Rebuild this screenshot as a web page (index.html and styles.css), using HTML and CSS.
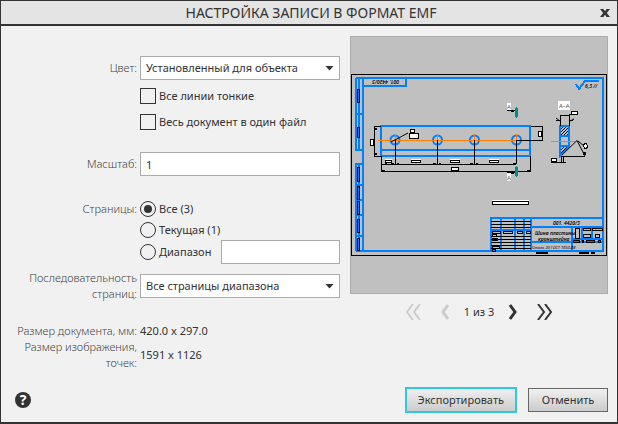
FILE: index.html
```html
<!DOCTYPE html>
<html lang="ru">
<head>
<meta charset="utf-8">
<meta name="viewport" content="width=device-width, initial-scale=1">
<title>Настройка записи в формат EMF</title>
<link rel="stylesheet" href="styles.css">
</head>
<body>
<div class="dialog">
  <header class="titlebar">
    <h1 class="title">НАСТРОЙКА ЗАПИСИ В ФОРМАТ EMF</h1>
    <button class="icon-button close" type="button" aria-label="Закрыть">
      <svg width="10" height="10" viewBox="0 0 10 10"><path d="M0 1H3.4L5 3.2 6.6 1H10L6.8 5 10 9H6.6L5 6.7 3.4 9H0L3.2 5Z" fill="#333"/></svg>
    </button>
  </header>
  <main class="content">
    <form class="form">
      <div class="row">
        <label class="label" for="color">Цвет:</label>
        <div class="select-box"><select class="field" id="color"><option>Установленный для объекта</option></select></div>
      </div>
      <div class="row checks">
        <div class="options">
          <label class="option"><input class="check" type="checkbox">Все линии тонкие</label>
          <label class="option"><input class="check" type="checkbox">Весь документ в один файл</label>
        </div>
      </div>
      <div class="row scale">
        <label class="label" for="scale">Масштаб:</label>
        <input class="field" id="scale" type="text" value="1">
      </div>
      <div class="row pages" role="radiogroup" aria-labelledby="pages-label">
        <span class="label" id="pages-label">Страницы:</span>
        <div class="radios">
          <label class="option"><input class="radio" type="radio" name="pages" checked>Все (3)</label>
          <label class="option"><input class="radio" type="radio" name="pages">Текущая (1)</label>
          <label class="option"><input class="radio" type="radio" name="pages">Диапазон</label>
          <input class="field range" type="text" aria-label="Диапазон страниц">
        </div>
      </div>
      <div class="row order">
        <label class="label" for="order">Последовательность страниц:</label>
        <div class="select-box"><select class="field" id="order"><option>Все страницы диапазона</option></select></div>
      </div>
      <dl class="sizes">
        <div class="row"><dt class="label">Размер документа, мм:</dt><dd class="value">420.0 x 297.0</dd></div>
        <div class="row"><dt class="label">Размер изображения, точек:</dt><dd class="value">1591 x 1126</dd></div>
      </dl>
    </form>
    <section class="preview" aria-label="Просмотр">
      <svg class="drawing" viewBox="350 36 258 258">
        <defs>
          <pattern id="hatch" width="3" height="3" patternUnits="userSpaceOnUse"><path d="M0 3L3 0" stroke="#000"/></pattern>
        </defs>
        <rect x="350" y="36" width="258" height="258" fill="#c0c0c0"/>
        <path d="M350.500 36.500H607.500V293.500H350.500Z" fill="none" stroke="#acacac"/>
        <g fill="none" shape-rendering="crispEdges">
          <path d="M351.500 74.500H606.500V255.500H351.500Z" stroke="#000"/>
          <g stroke="#0080ff" stroke-width="2">
            <path d="M356 78H603V251H356M363 78V251M356 78V150H363M356 114H363M359 78V150M356 251V164H363M359 164V251M356 185H363M356 200H363M356 215H363M356 236H363M363 86H406V78"/>
            <path d="M381 126H530V156H381ZM381 150H530"/>
            <path d="M560 126H569V147L560 156ZM560 136H569M560 146H569"/>
            <path d="M491 251V218H603M501 218V251M515 218V251M524 218V251M531 218V251M491 230H531M531 227H603M531 242H572M572 227V251M572 239H603M582 227V242M592 227V242M572 242H603"/>
            <path d="M576 84L579 89 585 81H599"/>
          </g>
          <g stroke="#0080ff" stroke-width="2" shape-rendering="auto">
            <circle cx="395" cy="140" r="4.500"/><circle cx="437.500" cy="140" r="4.500"/><circle cx="474.500" cy="140" r="4.500"/><circle cx="516.500" cy="140" r="4.500"/>
          </g>
          <path d="M378 140.500H523M395.500 134V146M437.500 134V146M474.500 134V146M516.500 134V146M551 141.500H575" stroke="#ff8000"/>
          <g stroke="#000">
            <path d="M395.500 140V164M437.500 140V164M474.500 140V164M516.500 140V164M381 164.500H516M381.500 156V171.500H530.500V156M381 126.500H374.500V156.500H381M531 126.500H542.500V140.500H516"/>
            <path d="M391 142L408 133" shape-rendering="auto"/>
            <path d="M507 110.500H515M507 172.500H515M560.500 126V115.500H569.500V126M569 114.500H572M556 120.500H560M570 120.500H573M561 156.500H585M561.500 156V162M563.500 156V162M551 162.500H566"/>
            <path d="M562 155L577 140.500 585 156M578 141L584 146M556 118L560 121M574 119L570 121" shape-rendering="auto"/>
            <path d="M491 221.500H531M491 224.500H531M491 227.500H531M491 236.500H531M491 239.500H531M491 242.500H531M491 245.500H531M491 248.500H531"/>
          </g>
          <g fill="#000">
            <path d="M385 163H387V165H385ZM391 163H394V165H391ZM397 163H399V165H397ZM433 163H436V165H433ZM439 163H441V165H439ZM470 163H473V165H470ZM476 163H478V165H476ZM513 163H516V165H513ZM382 170H385V172H382ZM527 170H530V172H527ZM375 128H377V130H375ZM375 153H377V155H375ZM583 152H586V155H583ZM511 110H514V112H511ZM511 172H514V174H511Z"/>
          </g>
          <g stroke="#000">
            <path d="M357.500 89.500H359.500V102.500H357.500ZM357.500 127.500H359.500V137.500H357.500ZM357.500 167.500H359.500V181.500H357.500ZM357.500 186.500H359.500V199.500H357.500ZM357.500 201.500H359.500V214.500H357.500ZM357.500 219.500H359.500V232.500H357.500ZM357.500 238.500H359.500V250.500H357.500Z"/>
            <path fill="#fff" d="M370.500 139.500H373.500V145.500H370.500ZM410.500 129.500H414.500V132.500H410.500ZM409.500 133.500H418.500V138.500H409.500ZM385.500 160.500H391.500V162.500H385.500ZM411.500 160.500H420.500V162.500H411.500ZM450.500 160.500H459.500V162.500H450.500ZM489.500 160.500H498.500V162.500H489.500ZM451.500 167.500H458.500V170.500H451.500ZM538.500 131.500H541.500V136.500H538.500ZM571.500 111.500H577.500V114.500H571.500ZM551.500 158.500H556.500V161.500H551.500ZM492.500 201.500H528.500V204.500H492.500Z"/>
            <path fill="#fff" d="M583 145L586 143 588 147 585 149Z"/>
            <path d="M575.500 228.500H579.500V238.500H575.500ZM583.500 228.500H590.500V230.500H583.500ZM592.500 228.500H602.500V230.500H592.500ZM583.500 234.500H590.500V237.500H583.500ZM595.500 234.500H599.500V237.500H595.500ZM573.500 240.500H579.500V242.500H573.500ZM582.500 240.500H583.500V242.500H582.500ZM586.500 240.500H594.500V242.500H586.500ZM598.500 240.500H600.500V242.500H598.500Z"/>
            <path d="M492.500 231.500H500.500V233.500H492.500ZM503.500 231.500H512.500V233.500H503.500ZM517.500 231.500H522.500V233.500H517.500ZM526.500 231.500H530.500V233.500H526.500ZM492.500 234.500H496.500V236.500H492.500ZM492.500 238.500H497.500V240.500H492.500ZM492.500 246.500H499.500V248.500H492.500ZM492.500 249.500H495.500V251.500H492.500ZM536.500 252.500H547.500V253.500H536.500ZM579.500 252.500H588.500V253.500H579.500ZM591.500 252.500H594.500V253.500H591.500Z"/>
          </g>
          <path fill="#fff" d="M492 200H529V201H492ZM507 103H511V110H507ZM507 173H511V181H507ZM558 101H570V110H558ZM385 159H392V160H385ZM411 159H421V160H411ZM450 159H460V160H450ZM489 159H499V160H489Z"/>
          <path fill="url(#hatch)" d="M561 127H568V135H561ZM561 147H568L561 155Z"/>
          <path fill="#008c8c" d="M515 109L516 107H517L518 109V116L517 118H516L515 116ZM515 168L516 166H517L518 168V175L517 177H516L515 175Z"/>
        </g>
        <g class="drawing-text">
          <text x="372" y="83" transform="rotate(180 385.500 81.500)">001. 4420/3</text>
          <text x="553" y="225">001. 4420/3</text>
          <text x="535" y="235">Шина пластины</text>
          <text x="538" y="241">кронштейна</text>
          <text class="fine" x="532" y="249">Сталь 20 ГОСТ 1050-88</text>
          <text x="585" y="88">6,3 //</text>
          <text class="mark" x="507" y="109">А</text>
          <text class="mark" x="507" y="180">А</text>
          <text class="mark" x="559" y="108">А–А</text>
        </g>
      </svg>
      <nav class="pager" aria-label="Страницы">
        <button class="icon-button edge" type="button" disabled aria-label="Первая страница"><svg width="16" height="16" viewBox="0 0 16 16"><path d="M8 0L2 8 8 16M15 0L9 8 15 16"/></svg></button>
        <button class="icon-button" type="button" disabled aria-label="Предыдущая страница"><svg width="10" height="16" viewBox="0 0 10 16"><path class="thick" d="M8 1L3 8 8 15"/></svg></button>
        <span class="page-count">1 из 3</span>
        <button class="icon-button" type="button" aria-label="Следующая страница"><svg width="10" height="16" viewBox="0 0 10 16"><path class="thick" d="M2 1L7 8 2 15"/></svg></button>
        <button class="icon-button edge" type="button" aria-label="Последняя страница"><svg width="16" height="16" viewBox="0 0 16 16"><path d="M1 0L7 8 1 16M8 0L14 8 8 16"/></svg></button>
      </nav>
    </section>
  </main>
  <footer class="footer">
    <button class="icon-button help" type="button" aria-label="Справка">?</button>
    <button class="button primary" type="button">Экспортировать</button>
    <button class="button" type="button">Отменить</button>
  </footer>
</div>
</body>
</html>
```

FILE: styles.css
```css
* {
  box-sizing: border-box;
}

body {
  margin: 0;
  color: #333;
  font: 11px/16px "Noto Sans", "Open Sans", sans-serif;
}

button,
input,
select {
  color: inherit;
  font: inherit;
}

.dialog {
  display: flex;
  flex-direction: column;
  min-height: 100vh;
  border: 1px solid #333;
  border-bottom-width: 2px;
  background: #f1f1f1;
}

.titlebar {
  display: flex;
  align-items: center;
  height: 25px;
  padding: 0 7px 0 21px;
  border-bottom: 2px solid #333;
  background: #e4e4e4;
}

.title {
  flex: 1;
  margin: 0;
  font-size: 14px;
  font-weight: 400;
  text-align: center;
}

.icon-button {
  display: flex;
  padding: 0;
  border: 0;
  background: none;
}

.content {
  display: grid;
  grid-template-columns: 330fr 258fr;
  gap: 10px;
  padding: 10px 9px 0;
}

.form {
  padding-top: 20px;
}

.row {
  display: grid;
  grid-template-columns: 127px 1fr;
  column-gap: 3px;
  align-items: center;
}

.label {
  color: #444;
  font-weight: 300;
  text-align: right;
}

.field {
  display: block;
  width: 100%;
  height: 24px;
  padding: 0 5px;
  border: 1px solid #acacac;
  border-radius: 0;
  background: #fff;
  appearance: none;
}

.select-box {
  display: grid;
  align-items: center;
}

.select-box::after {
  grid-area: 1 / 1;
  justify-self: end;
  width: 9px;
  height: 5px;
  margin-right: 6px;
  background: #333;
  clip-path: polygon(0 0, 100% 0, 50% 100%);
  content: "";
  pointer-events: none;
}

.select-box .field {
  grid-area: 1 / 1;
}

.checks {
  margin-top: 8px;
}

.options {
  display: grid;
  grid-column: 2;
  gap: 10px;
}

.option {
  display: flex;
  align-items: center;
  gap: 3px;
}

.check,
.radio {
  flex: none;
  width: 16px;
  height: 16px;
  margin: 0;
  border: 1px solid #333;
  appearance: none;
}

.radio {
  display: grid;
  place-items: center;
  border-radius: 50%;
}

.radio:checked::before {
  width: 8px;
  height: 8px;
  border-radius: 50%;
  background: #333;
  content: "";
}

.scale {
  margin-top: 22px;
}

.pages {
  align-items: start;
  margin-top: 23px;
}

.pages .label {
  line-height: 20px;
}

.radios {
  display: grid;
  grid-template-columns: auto 1fr;
  grid-template-rows: 20px 21px 24px;
  column-gap: 10px;
}

.radios .option:nth-child(-n + 2) {
  grid-column: 1 / -1;
}

.order {
  margin-top: 6px;
}

.sizes {
  margin: 21px 0 0;
}

.value {
  margin: 0;
}

.drawing {
  display: block;
  width: 100%;
}

.drawing-text {
  font-size: 5px;
  font-style: italic;
  font-weight: 600;
}

.drawing-text .fine {
  font-size: 4px;
  font-weight: 400;
}

.drawing-text .mark {
  fill: #555;
  font-size: 6px;
  font-style: normal;
  font-weight: 400;
}

.pager {
  display: flex;
  align-items: center;
  justify-content: center;
  gap: 14px;
  margin-top: 10px;
}

.pager .edge:first-child {
  margin-right: 5px;
}

.pager .edge:last-child {
  margin-left: 5px;
}

.pager path {
  fill: none;
  stroke: #333;
  stroke-width: 2;
}

.pager .thick {
  stroke-width: 3;
}

.pager :disabled path {
  stroke: #ccc;
}

.footer {
  display: flex;
  align-items: center;
  gap: 11px;
  margin-top: auto;
  padding: 0 9px 9px 14px;
}

.help {
  justify-content: center;
  width: 16px;
  height: 16px;
  margin-right: auto;
  border-radius: 50%;
  background: #333;
  color: #fff;
  font-size: 14px;
  font-weight: 700;
}

.button {
  min-width: 80px;
  height: 24px;
  padding: 0 11px;
  border: 1px solid #666;
  background: linear-gradient(#f0f0f0, #ccc);
}

.primary {
  height: 26px;
  border: 2px solid #2fc8e2;
}
```
